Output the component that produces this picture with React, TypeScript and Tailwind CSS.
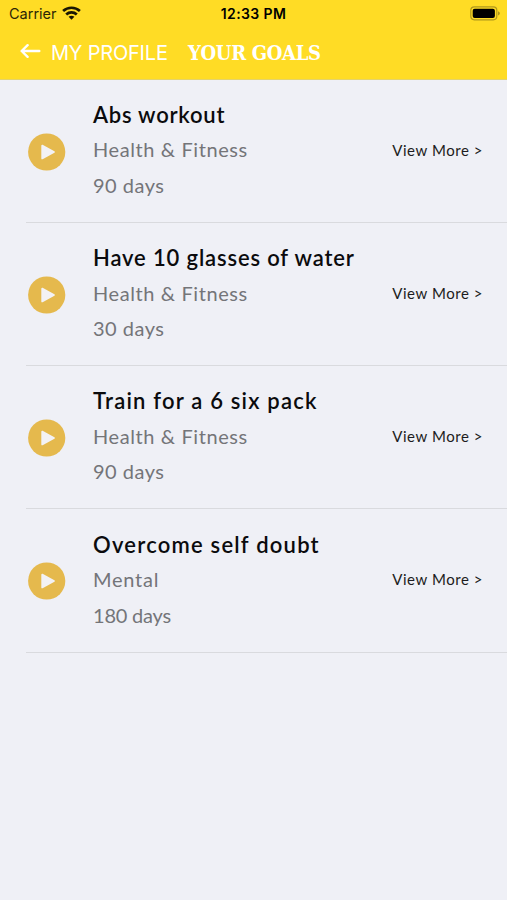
import React from "react";

const goals = [
  { name: "Abs workout", category: "Health & Fitness", days: "90 days", nameClass: "tracking-[0.75px]", categoryClass: "tracking-[0.6px]", daysClass: "tracking-[0.5px]" },
  { name: "Have 10 glasses of water", category: "Health & Fitness", days: "30 days", nameClass: "tracking-[0.85px]", categoryClass: "tracking-[0.6px]", daysClass: "tracking-[0.5px]" },
  { name: "Train for a 6 six pack", category: "Health & Fitness", days: "90 days", nameClass: "tracking-[1.2px]", categoryClass: "tracking-[0.6px]", daysClass: "tracking-[0.5px]" },
  { name: "Overcome self doubt", category: "Mental", days: "180 days", nameClass: "tracking-[1.22px]", categoryClass: "tracking-[0.75px]", daysClass: "tracking-[-0.2px]" },
];

const StatusBar = () => (
  <div className="flex h-7 items-center justify-between pl-[9px] pr-[7px] text-black font-['Inter',sans-serif]">
    <div className="flex w-[120px] items-center gap-[5px]">
      <span className="text-[14.5px] leading-7 text-[#2b2605]">Carrier</span>
      <svg width="19" height="14" viewBox="0 0 19 14" className="-mt-[2px]" fill="none" stroke="#1a1703" strokeWidth="2.7">
        <path d="M1.1 5.1C5.8.6 13.2.6 17.9 5.1" />
        <path d="M4.2 8.4c3-2.8 7.6-2.8 10.6 0" />
        <path d="M6.6 10.8c1.7-1.5 4.1-1.5 5.8 0L9.5 13.7Z" fill="#1a1703" stroke="none" />
      </svg>
    </div>
    <span className="mr-[2px] text-[14px] font-semibold leading-7 tracking-[0.4px]">12:33 PM</span>
    <div className="flex w-[120px] justify-end">
      <svg width="30" height="15" viewBox="0 0 30 15" className="-mt-[2px]">
        <rect x="0.8" y="0.8" width="26" height="13" rx="3.5" fill="none" stroke="#b0981c" strokeWidth="1.2" />
        <rect x="2.7" y="2.7" width="22.2" height="9.2" rx="2" fill="#000" />
        <path d="M28.2 5.2c2 .8 2 3.5 0 4.3Z" fill="#9b851b" />
      </svg>
    </div>
  </div>
);

const PlayIcon = () => (
  <svg width="38" height="38" viewBox="0 0 38 38" className="shrink-0">
    <circle cx="18.7" cy="19" r="18.6" fill="#e5b94d" />
    <path d="M14.2 12.6v12.8L26 19Z" fill="#f3f2f5" stroke="#f3f2f5" strokeWidth="1.8" strokeLinejoin="round" />
  </svg>
);

const Goal = (props: any) => {
  return (
    <div className="ml-[26px] flex h-[143.3px] border-b border-[#d9dade] pl-[2px]">
      <div className="pt-[53px]">
        <PlayIcon />
      </div>
      <div className="ml-[27px] flex-1 whitespace-nowrap pt-[17.2px] text-[20px] leading-[35.5px] text-[#747579]">
        <h2 className="text-[22px] font-semibold leading-[35.5px] text-[#0b0b0d]">
          <span className={props.goal.nameClass}>{props.goal.name}</span>
        </h2>
        <p>
          <span className={props.goal.categoryClass}>{props.goal.category}</span>
        </p>
        <p>
          <span className={props.goal.daysClass}>{props.goal.days}</span>
        </p>
      </div>
      <a className="mr-[24px] whitespace-nowrap pt-[53px] text-[15px] leading-[35px] tracking-[0.55px] text-[#1c1c20]">
        View More &gt;
      </a>
    </div>
  );
};

const App = () => {
  return (
    <div className="min-h-[900px] w-full bg-[#eff0f6] font-['Lato',sans-serif]">
      <header className="h-[79.6px] border-b border-[#e4d36b] bg-[#ffdc25]">
        <StatusBar />
        <div className="flex h-[49px] items-center pl-[20px] text-white">
          <svg width="21" height="16" viewBox="0 0 21 16" className="-mt-[3px]" fill="none" stroke="#fff" strokeWidth="2.4" strokeLinecap="round" strokeLinejoin="round">
            <path d="M19.3 8H1.8M7.6 2.2 1.6 8l6 5.8" />
          </svg>
          <span className="ml-[10px] w-[137px] whitespace-nowrap text-[20px] tracking-[-0.2px] font-['Inter',sans-serif]">MY PROFILE</span>
          <h1 className="whitespace-nowrap text-[20px] font-bold tracking-[-0.35px] font-['DejaVu_Serif',serif] [font-stretch:condensed]">YOUR GOALS</h1>
        </div>
      </header>
      {goals.map((goal) => (
        <Goal key={goal.name} goal={goal} />
      ))}
    </div>
  );
};

export default App;
